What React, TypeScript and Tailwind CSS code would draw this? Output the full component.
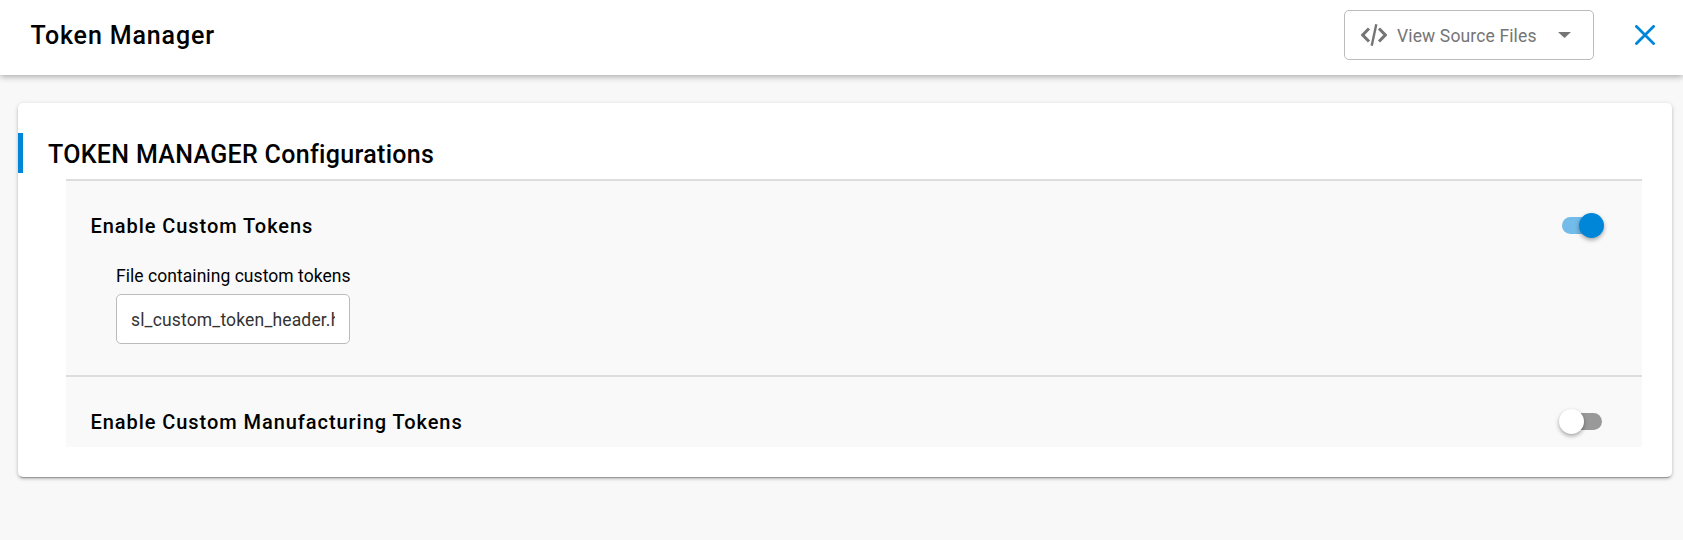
import React from "react";

function Toggle({ on }: { on: boolean }) {
  return (
    <button
      role="switch"
      aria-checked={on}
      className={`relative h-[17px] w-10 rounded-full ${on ? "bg-[#73bbe9]" : "bg-[#999999]"}`}
    >
      <span
        className={`absolute -top-1 size-[25px] rounded-full shadow-[0_2px_4px_rgba(0,0,0,0.35)] ${
          on ? "-right-[2px] bg-[#0086d9]" : "-left-[3px] bg-white"
        }`}
      />
    </button>
  );
}

function Row({ title, on }: { title: string; on: boolean }) {
  return (
    <div className="flex h-[25px] items-center justify-between pr-10 pl-[24.5px]">
      <h3 className="pt-[2px] text-[20px] leading-[25px] font-medium tracking-[0.94px]">{title}</h3>
      <Toggle on={on} />
    </div>
  );
}

export default function App() {
  return (
    <div className="flex h-[540px] w-full flex-col overflow-hidden bg-[#f8f8f8] font-['Roboto',sans-serif] text-black">
      <header className="flex h-[75px] shrink-0 items-center bg-white pb-[5px] pl-[30.5px] shadow-[0_1px_7px_rgba(0,0,0,0.38)]">
        <h1 className="pt-[2px] text-[25px] leading-[30px] font-medium tracking-[0.87px]">Token Manager</h1>
        <button className="ml-auto flex h-[50px] w-[250px] items-center rounded-[5px] border border-[#bbbbbb] pl-4 text-[17.5px] text-[#757575]">
          <svg width="26" height="22" viewBox="0 0 26 22" fill="none" stroke="#757575" strokeWidth="3">
            <path d="M8 4.5 1.7 11l6.3 6.5M18 4.5 24.3 11l-6.3 6.5" />
            <path d="M15.3 0.3 10.7 21.7" strokeWidth="2.4" />
          </svg>
          <span className="ml-[10px] pt-[2px] tracking-[0.14px] whitespace-nowrap">View Source Files</span>
          <svg className="ml-[21px]" width="13" height="6" viewBox="0 0 13 6" fill="#757575">
            <path d="M0 0h13L6.5 6z" />
          </svg>
        </button>
        <button className="mr-7 ml-[41px]" aria-label="Close">
          <svg width="20" height="20" viewBox="0 0 20 20" stroke="#0086d9" strokeWidth="2.8">
            <path d="M0.5 0.5 19.5 19.5M19.5 0.5 0.5 19.5" />
          </svg>
        </button>
      </header>
      <main className="mt-7 mr-[11px] ml-[18px] h-[374px] rounded-[5px] bg-white pt-[30px] shadow-[0_3px_1px_-2px_rgba(0,0,0,0.25),0_2px_3px_rgba(0,0,0,0.15),0_1px_5px_rgba(0,0,0,0.14)]">
        <div className="flex h-10 items-center border-l-[5px] border-[#0086d9] pl-[25px]">
          <h2 className="pt-[3px] text-[25px] leading-[30px] font-medium tracking-[0.32px]">TOKEN MANAGER Configurations</h2>
        </div>
        <div className="mt-[6px] mr-[30px] ml-12 bg-[#f9f9f9]">
          <section className="h-[196px] border-t-2 border-[#dddddd] pt-8">
            <Row title="Enable Custom Tokens" on />
            <label className="mt-[26px] ml-[50px] flex w-[234px] flex-col text-[17.5px] leading-[25px]">
              <span className="tracking-[0.05px] whitespace-nowrap">File containing custom tokens</span>
              <input
                readOnly
                value="sl_custom_token_header.h"
                className="mt-[5px] h-[50px] w-full rounded-[5px] border border-[#bbbbbb] bg-white px-[14px] pt-[2px] tracking-[0.16px] text-[#333333] outline-none"
              />
            </label>
          </section>
          <section className="h-[72px] border-t-2 border-[#dddddd] pt-8">
            <Row title="Enable Custom Manufacturing Tokens" on={false} />
          </section>
        </div>
      </main>
    </div>
  );
}
